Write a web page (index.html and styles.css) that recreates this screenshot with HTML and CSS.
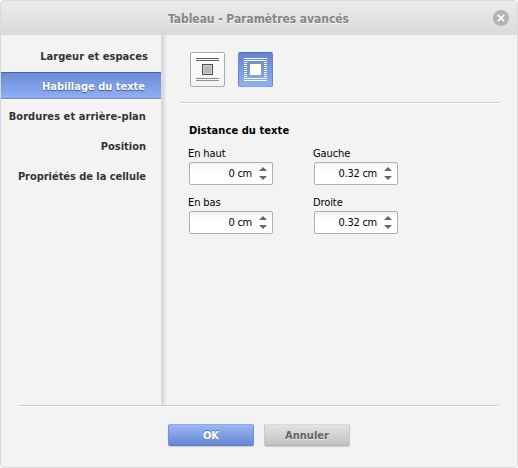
FILE: index.html
```html
<!DOCTYPE html>
<html lang="fr">
<head>
<meta charset="utf-8">
<title>Tableau - Paramètres avancés</title>
<link rel="stylesheet" href="styles.css">
</head>
<body>
<div class="dialog">
  <header class="header">
    <h1 class="title">Tableau - Paramètres avancés</h1>
    <svg class="close" width="16" height="16" viewBox="0 0 16 16"><circle cx="8" cy="8" r="8" fill="#b3b3b3"/><path d="M4.8 4.8l6.4 6.4M11.2 4.8l-6.4 6.4" stroke="#fff" stroke-width="1.7"/></svg>
  </header>
  <div class="body">
    <nav class="nav">
      <a class="item first">Largeur et espaces</a>
      <a class="item active">Habillage du texte</a>
      <a class="item borders">Bordures et arrière-plan</a>
      <a class="item">Position</a>
      <a class="item cell">Propriétés de la cellule</a>
    </nav>
    <div class="divider"></div>
    <main class="panel">
      <div class="modes">
        <button class="mode">
          <svg width="23" height="23" viewBox="0 0 23 23"><path d="M0 .5h23M0 2.5h23" stroke="#5c5c5c"/><path d="M0 20.5h23M0 22.5h23" stroke="#8c8c8c"/><rect x="6.5" y="6.5" width="10" height="10" fill="#b9b9b9" stroke="#505050"/><rect x="7.5" y="7.5" width="8" height="8" fill="none" stroke="#cecece"/></svg>
        </button>
        <button class="mode selected">
          <svg width="23" height="23" viewBox="0 0 23 23" fill="none" stroke="#fff"><path d="M0 .5h23M0 2.5h23M0 20.5h23M0 22.5h23"/><path d="M0 4.5h3M0 6.5h3M0 8.5h3M0 10.5h3M0 12.5h3M0 14.5h3M0 16.5h3M0 18.5h3M20 4.5h3M20 6.5h3M20 8.5h3M20 10.5h3M20 12.5h3M20 14.5h3M20 16.5h3M20 18.5h3"/><rect x="6" y="6" width="11" height="11" fill="#fff" stroke="none"/></svg>
        </button>
      </div>
      <h2 class="heading">Distance du texte</h2>
      <div class="fields">
        <label class="field"><span class="label">En haut</span><span class="spin"><span class="value">0 cm</span><svg class="arrows" width="8" height="13" viewBox="0 0 8 13"><path d="M0 4L4 0L8 4zM0 9L4 13L8 9z"/></svg></span></label>
        <label class="field"><span class="label">Gauche</span><span class="spin"><span class="value">0.32 cm</span><svg class="arrows" width="8" height="13" viewBox="0 0 8 13"><path d="M0 4L4 0L8 4zM0 9L4 13L8 9z"/></svg></span></label>
        <label class="field"><span class="label">En bas</span><span class="spin"><span class="value">0 cm</span><svg class="arrows" width="8" height="13" viewBox="0 0 8 13"><path d="M0 4L4 0L8 4zM0 9L4 13L8 9z"/></svg></span></label>
        <label class="field"><span class="label">Droite</span><span class="spin"><span class="value">0.32 cm</span><svg class="arrows" width="8" height="13" viewBox="0 0 8 13"><path d="M0 4L4 0L8 4zM0 9L4 13L8 9z"/></svg></span></label>
      </div>
    </main>
  </div>
  <footer class="footer">
    <button class="btn ok">OK</button>
    <button class="btn cancel">Annuler</button>
  </footer>
</div>
</body>
</html>
```
FILE: styles.css
```css
* { box-sizing: border-box; }
body { margin: 0; background: #fff; font: 11px/14px "DejaVu Sans Condensed", "DejaVu Sans", sans-serif; font-stretch: condensed; color: #000; }
.dialog { width: 518px; height: 468px; border: 1px solid #d9d9d9; border-radius: 4px; background: #f3f3f3; overflow: hidden; display: flex; flex-direction: column; }
.header { height: 34px; flex: none; display: flex; align-items: center; justify-content: center; padding: 0 8px 0 24px; background: linear-gradient(#ebebeb, #dadada); }
.title { margin: 0 0 0 90px; flex: 1; padding: 1px 91px 0 0; text-align: center; font-size: 12px; font-weight: bold; line-height: 16px; letter-spacing: -0.05px; color: #868686; text-shadow: 0 1px 0 #f3f3f3; white-space: nowrap; }
.close { display: block; flex: none; }
.body { height: 370px; flex: none; display: flex; }
.nav { width: 160px; padding-top: 7px; color: #333; font-weight: bold; text-align: right; }
.item { display: block; height: 30px; line-height: 30px; padding-right: 15px; white-space: nowrap; }
.item.first { padding-right: 13px; letter-spacing: 0.06px; }
.item.active { height: 27px; line-height: 27px; margin-bottom: 3px; padding-right: 16px; color: #fff; text-shadow: 0 1px 1px #3d5687; background: linear-gradient(#6c8dd6, #8eaff5); border-top: 1px solid #4b659c; border-bottom: 1px solid #7089c1; box-shadow: 0 1px 0 #fff; }
.item.borders { letter-spacing: 0.07px; }
.item.cell { letter-spacing: -0.04px; }
.divider { width: 6px; background: linear-gradient(90deg, #d8d8d8 0, #dbdbdb 35%, #f3f3f3); }
.panel { flex: 1; padding: 17px 18px 0 13px; }
.modes { display: flex; gap: 13px; height: 51px; padding-left: 10px; border-bottom: 1px solid #ccc; box-shadow: 0 1px 0 #fff; }
.mode { width: 35px; height: 35px; padding: 5px; border: 1px solid #aaa; border-radius: 2px; background: linear-gradient(#fff, #f3f3f3); }
.mode svg { display: block; }
.mode.selected { border-color: #526fae #6b88cb #7f9de0; background: linear-gradient(#6485cf, #8eaff5); }
.heading { margin: 21px 0 9px 9px; font-size: 11px; line-height: 14px; letter-spacing: 0.08px; }
.fields { margin-left: 9px; display: grid; grid-template-columns: 84px 84px; column-gap: 41px; row-gap: 11px; }
.field { display: block; }
.label { display: block; height: 15px; line-height: 14px; margin-left: -1px; letter-spacing: -0.1px; }
.spin { display: flex; align-items: center; height: 23px; border: 1px solid #afafaf; border-radius: 2px; background: linear-gradient(#f3f3f3, #fff 8px); padding-right: 5px; }
.value { flex: 1; text-align: right; padding: 1px 7px 0 0; line-height: 20px; letter-spacing: -0.25px; white-space: nowrap; }
.arrows { fill: #666; }
.footer { flex: 1; margin: 0 18px; border-top: 1px solid #ccc; box-shadow: inset 0 1px 0 #fff; display: flex; justify-content: center; align-items: flex-start; gap: 10px; padding-top: 18px; }
.btn { width: 86px; height: 22px; padding: 1px 0 0; border: 1px solid; border-radius: 2px; font: bold 11px/19px "DejaVu Sans Condensed", "DejaVu Sans", sans-serif; box-shadow: 0 1px 1px #ccc; }
.ok { color: #fff; border-color: #8baaf0 #7391d5 #6080c4; background: linear-gradient(#9ab6f5, #6687d1); text-shadow: 0 -1px 0 #5876b8; }
.cancel { color: #666; border-color: #d9d9d9 #c8c8c8 #b5b5b5; background: linear-gradient(#e3e3e3, #c1c1c1); text-shadow: 0 1px 0 #e5e5e5; }
```
